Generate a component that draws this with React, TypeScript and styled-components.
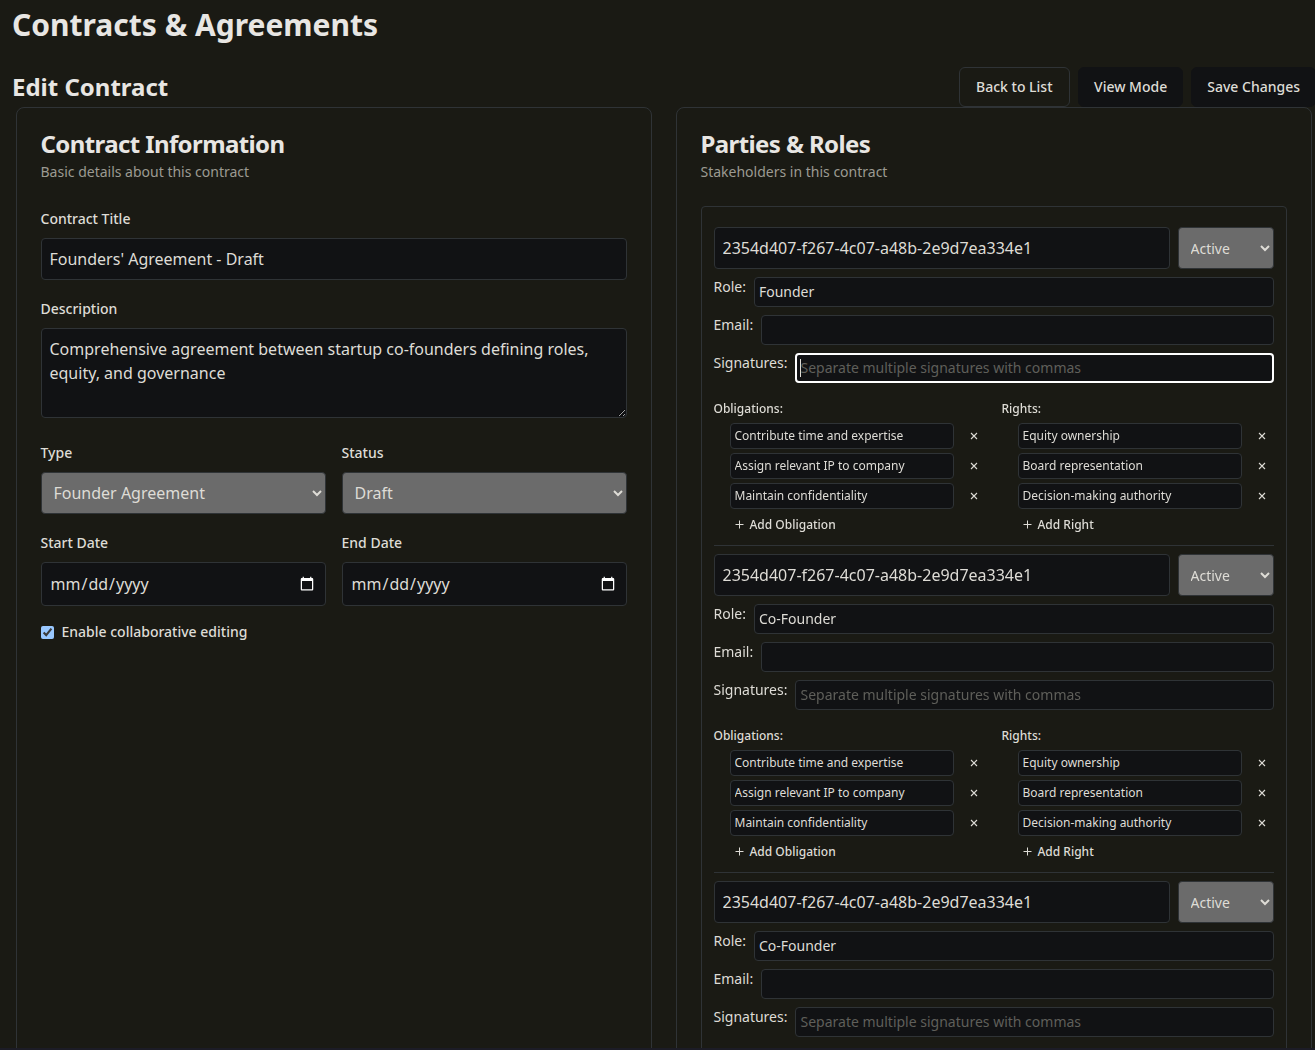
import React from 'react'
import styled, { createGlobalStyle } from 'styled-components'

const GlobalStyle = createGlobalStyle`
  html, body {
    margin: 0;
    height: 100%;
    overflow: hidden;
    background: #1c1c26;
    color-scheme: dark;
  }
  body, input, select, textarea, button {
    font-family: "Noto Sans", sans-serif;
  }
`

const Page = styled.div`
  height: 1048px;
  overflow: hidden;
  padding: 0 0 0 12px;
  box-sizing: border-box;
  background: #1a1a14;
  color: #dedcd6;
`

const PageTitle = styled.h1`
  margin: 0;
  height: 67px;
  font-size: 30px;
  line-height: 50px;
  font-weight: 700;
  color: #e8e6e3;
`

const EditHeader = styled.div`
  display: flex;
  justify-content: space-between;
  align-items: flex-end;
  height: 40px;
`

const EditTitle = styled.h2`
  margin: 0;
  font-size: 24px;
  line-height: 40px;
  font-weight: 700;
  color: #e8e6e3;
`

const Actions = styled.div`
  display: flex;
  gap: 8px;
  margin-right: -1px;
`

const ActionButton = styled.button<{ $outlined?: boolean }>`
  height: 40px;
  padding: 0 ${p => (p.$outlined ? 16.5 : 15)}px 2px;
  border-radius: 6px;
  border: 1px solid ${p => (p.$outlined ? '#2f3336' : '#111214')};
  background: ${p => (p.$outlined ? '#1a1a14' : '#111214')};
  color: #dedcd6;
  font-size: 14px;
  font-weight: 500;
`

const Columns = styled.div`
  display: grid;
  grid-template-columns: 636px 636px;
  gap: 24px;
  margin-left: 3.5px;
`

const Card = styled.section`
  border: 1px solid #2f3336;
  border-radius: 8px;
  padding: 24px;
  height: 1100px;
  box-sizing: border-box;
`

const CardTitle = styled.h3`
  margin: 0;
  font-size: 24px;
  line-height: 24px;
  font-weight: 700;
  letter-spacing: -0.6px;
  color: #e8e6e3;
`

const CardSubtitle = styled.p`
  margin: 6px 0 0;
  font-size: 14px;
  line-height: 20px;
  color: #9c9a92;
`

const Form = styled.div`
  margin-top: 27px;
  display: flex;
  flex-direction: column;
  gap: 19px;
`

const Field = styled.div`
  display: flex;
  flex-direction: column;
  gap: 9px;
`

const FieldRow = styled.div`
  display: grid;
  grid-template-columns: 1fr 1fr;
  gap: 16px;
`

const Label = styled.label`
  font-size: 14px;
  line-height: 20px;
  font-weight: 500;
`

const controlBase = `
  box-sizing: border-box;
  border: 1px solid #2f3336;
  background: #111214;
  color: #dedcd6;
  border-radius: 4px;
`

const TextInput = styled.input<{ $h?: number; $fs?: number; $pad?: number }>`
  ${controlBase}
  width: 100%;
  min-width: 0;
  height: ${p => p.$h ?? 42}px;
  font-size: ${p => p.$fs ?? 16}px;
  padding: 0 ${p => p.$pad ?? 8}px ${p => (p.$h ? 2 : 0)}px;
  &::placeholder {
    color: #5f5f5a;
  }
  &:focus {
    outline: 2px solid #fff;
    outline-offset: -2px;
    caret-color: transparent;
    background: linear-gradient(#dedcd6, #dedcd6) 4px 50% / 1px 18px no-repeat #111214;
  }
`

const TextArea = styled.textarea`
  ${controlBase}
  width: 100%;
  height: 90px;
  margin-bottom: 6px;
  font-size: 16px;
  line-height: 24px;
  padding: 8px;
`

const DateInput = styled.input`
  ${controlBase}
  width: 100%;
  height: 44px;
  font-size: 16px;
  padding: 0 8px;
`

const Select = styled.select<{ $fs?: number }>`
  box-sizing: border-box;
  border: 1px solid #2f3336;
  border-radius: 4px;
  background-color: #6b6b6b;
  color: #dedcd6;
  width: 100%;
  height: 42px;
  font-size: ${p => p.$fs ?? 16}px;
  padding: 0 8px;
`

const CheckRow = styled.label`
  display: flex;
  align-items: center;
  gap: 8px;
  margin-top: -3px;
  font-size: 14px;
  line-height: 20px;
  font-weight: 500;
`

const Check = styled.input`
  width: 13px;
  height: 13px;
  margin: 0;
`

const PartyList = styled.div`
  margin-top: 24px;
  border: 1px solid #2f3336;
  border-radius: 4px;
  padding: 20px 12px;
`

const Party = styled.div`
  padding-bottom: 8px;
  & + & {
    border-top: 1px solid #2f3336;
    padding-top: 8px;
  }
`

const PartyHead = styled.div`
  display: grid;
  grid-template-columns: 1fr 96px;
  gap: 8px;
`

const InlineField = styled.div`
  display: flex;
  gap: 8px;
  margin-top: 8px;
`

const InlineLabel = styled.label`
  font-size: 14px;
  line-height: 20px;
  white-space: nowrap;
`

const Lists = styled.div`
  display: grid;
  grid-template-columns: 1fr 1fr;
  gap: 16px;
  margin-top: 17px;
`

const ListTitle = styled.div`
  font-size: 12px;
  line-height: 18px;
  font-weight: 500;
  margin-bottom: 5px;
`

const ListRow = styled.div`
  display: flex;
  align-items: center;
  margin: 0 0 4px 16px;
`

const RemoveButton = styled.button`
  flex: 0 0 24px;
  height: 26px;
  margin-left: 8px;
  padding: 0;
  border: 0;
  background: none;
  color: #dedcd6;
  display: flex;
  align-items: center;
  justify-content: center;
`

const AddButton = styled.button`
  display: flex;
  align-items: center;
  gap: 6px;
  height: 24px;
  margin-left: 21px;
  padding: 0 0 2px;
  border: 0;
  background: none;
  color: #dedcd6;
  font-size: 12px;
  font-weight: 500;
`

const CrossIcon = () => (
  <svg width="8" height="8" viewBox="0 0 8 8" fill="none" stroke="currentColor" strokeWidth="1.1">
    <path d="M1 1l6 6M7 1L1 7" />
  </svg>
)

const PlusIcon = () => (
  <svg width="9" height="9" viewBox="0 0 9 9" fill="none" stroke="currentColor" strokeWidth="1">
    <path d="M4.5 0.5v8M0.5 4.5h8" />
  </svg>
)

const partyId = '2354d407-f267-4c07-a48b-2e9d7ea334e1'
const obligations = ['Contribute time and expertise', 'Assign relevant IP to company', 'Maintain confidentiality']
const rights = ['Equity ownership', 'Board representation', 'Decision-making authority']

const ItemList = ({ title, items, addLabel }: { title: string; items: string[]; addLabel: string }) => (
  <div>
    <ListTitle>{title}</ListTitle>
    {items.map(item => (
      <ListRow key={item}>
        <TextInput $h={26} $fs={12} $pad={4} defaultValue={item} />
        <RemoveButton>
          <CrossIcon />
        </RemoveButton>
      </ListRow>
    ))}
    <AddButton>
      <PlusIcon />
      {addLabel}
    </AddButton>
  </div>
)

const PartyBlock = ({ role, focused }: { role: string; focused?: boolean }) => (
  <Party>
    <PartyHead>
      <TextInput defaultValue={partyId} />
      <Select defaultValue="active" $fs={14}>
        <option value="active">Active</option>
      </Select>
    </PartyHead>
    <InlineField>
      <InlineLabel>Role:</InlineLabel>
      <TextInput $h={30} $fs={14} $pad={4} defaultValue={role} />
    </InlineField>
    <InlineField>
      <InlineLabel>Email:</InlineLabel>
      <TextInput $h={30} $fs={14} $pad={4} />
    </InlineField>
    <InlineField>
      <InlineLabel>Signatures:</InlineLabel>
      <TextInput
        $h={30}
        $fs={14}
        $pad={4}
        placeholder="Separate multiple signatures with commas"
        autoFocus={focused}
      />
    </InlineField>
    <Lists>
      <ItemList title="Obligations:" items={obligations} addLabel="Add Obligation" />
      <ItemList title="Rights:" items={rights} addLabel="Add Right" />
    </Lists>
  </Party>
)

export default function App() {
  return (
    <Page>
      <GlobalStyle />
      <PageTitle>Contracts &amp; Agreements</PageTitle>
      <EditHeader>
        <EditTitle>Edit Contract</EditTitle>
        <Actions>
          <ActionButton $outlined>Back to List</ActionButton>
          <ActionButton>View Mode</ActionButton>
          <ActionButton>Save Changes</ActionButton>
        </Actions>
      </EditHeader>
      <Columns>
        <Card>
          <CardTitle>Contract Information</CardTitle>
          <CardSubtitle>Basic details about this contract</CardSubtitle>
          <Form>
            <Field>
              <Label>Contract Title</Label>
              <TextInput defaultValue="Founders' Agreement - Draft" />
            </Field>
            <Field>
              <Label>Description</Label>
              <TextArea defaultValue="Comprehensive agreement between startup co-founders defining roles, equity, and governance" />
            </Field>
            <FieldRow>
              <Field>
                <Label>Type</Label>
                <Select defaultValue="founder">
                  <option value="founder">Founder Agreement</option>
                </Select>
              </Field>
              <Field>
                <Label>Status</Label>
                <Select defaultValue="draft">
                  <option value="draft">Draft</option>
                </Select>
              </Field>
            </FieldRow>
            <FieldRow>
              <Field>
                <Label>Start Date</Label>
                <DateInput type="date" />
              </Field>
              <Field>
                <Label>End Date</Label>
                <DateInput type="date" />
              </Field>
            </FieldRow>
            <CheckRow>
              <Check type="checkbox" defaultChecked />
              Enable collaborative editing
            </CheckRow>
          </Form>
        </Card>
        <Card>
          <CardTitle>Parties &amp; Roles</CardTitle>
          <CardSubtitle>Stakeholders in this contract</CardSubtitle>
          <PartyList>
            <PartyBlock role="Founder" focused />
            <PartyBlock role="Co-Founder" />
            <PartyBlock role="Co-Founder" />
          </PartyList>
        </Card>
      </Columns>
    </Page>
  )
}
